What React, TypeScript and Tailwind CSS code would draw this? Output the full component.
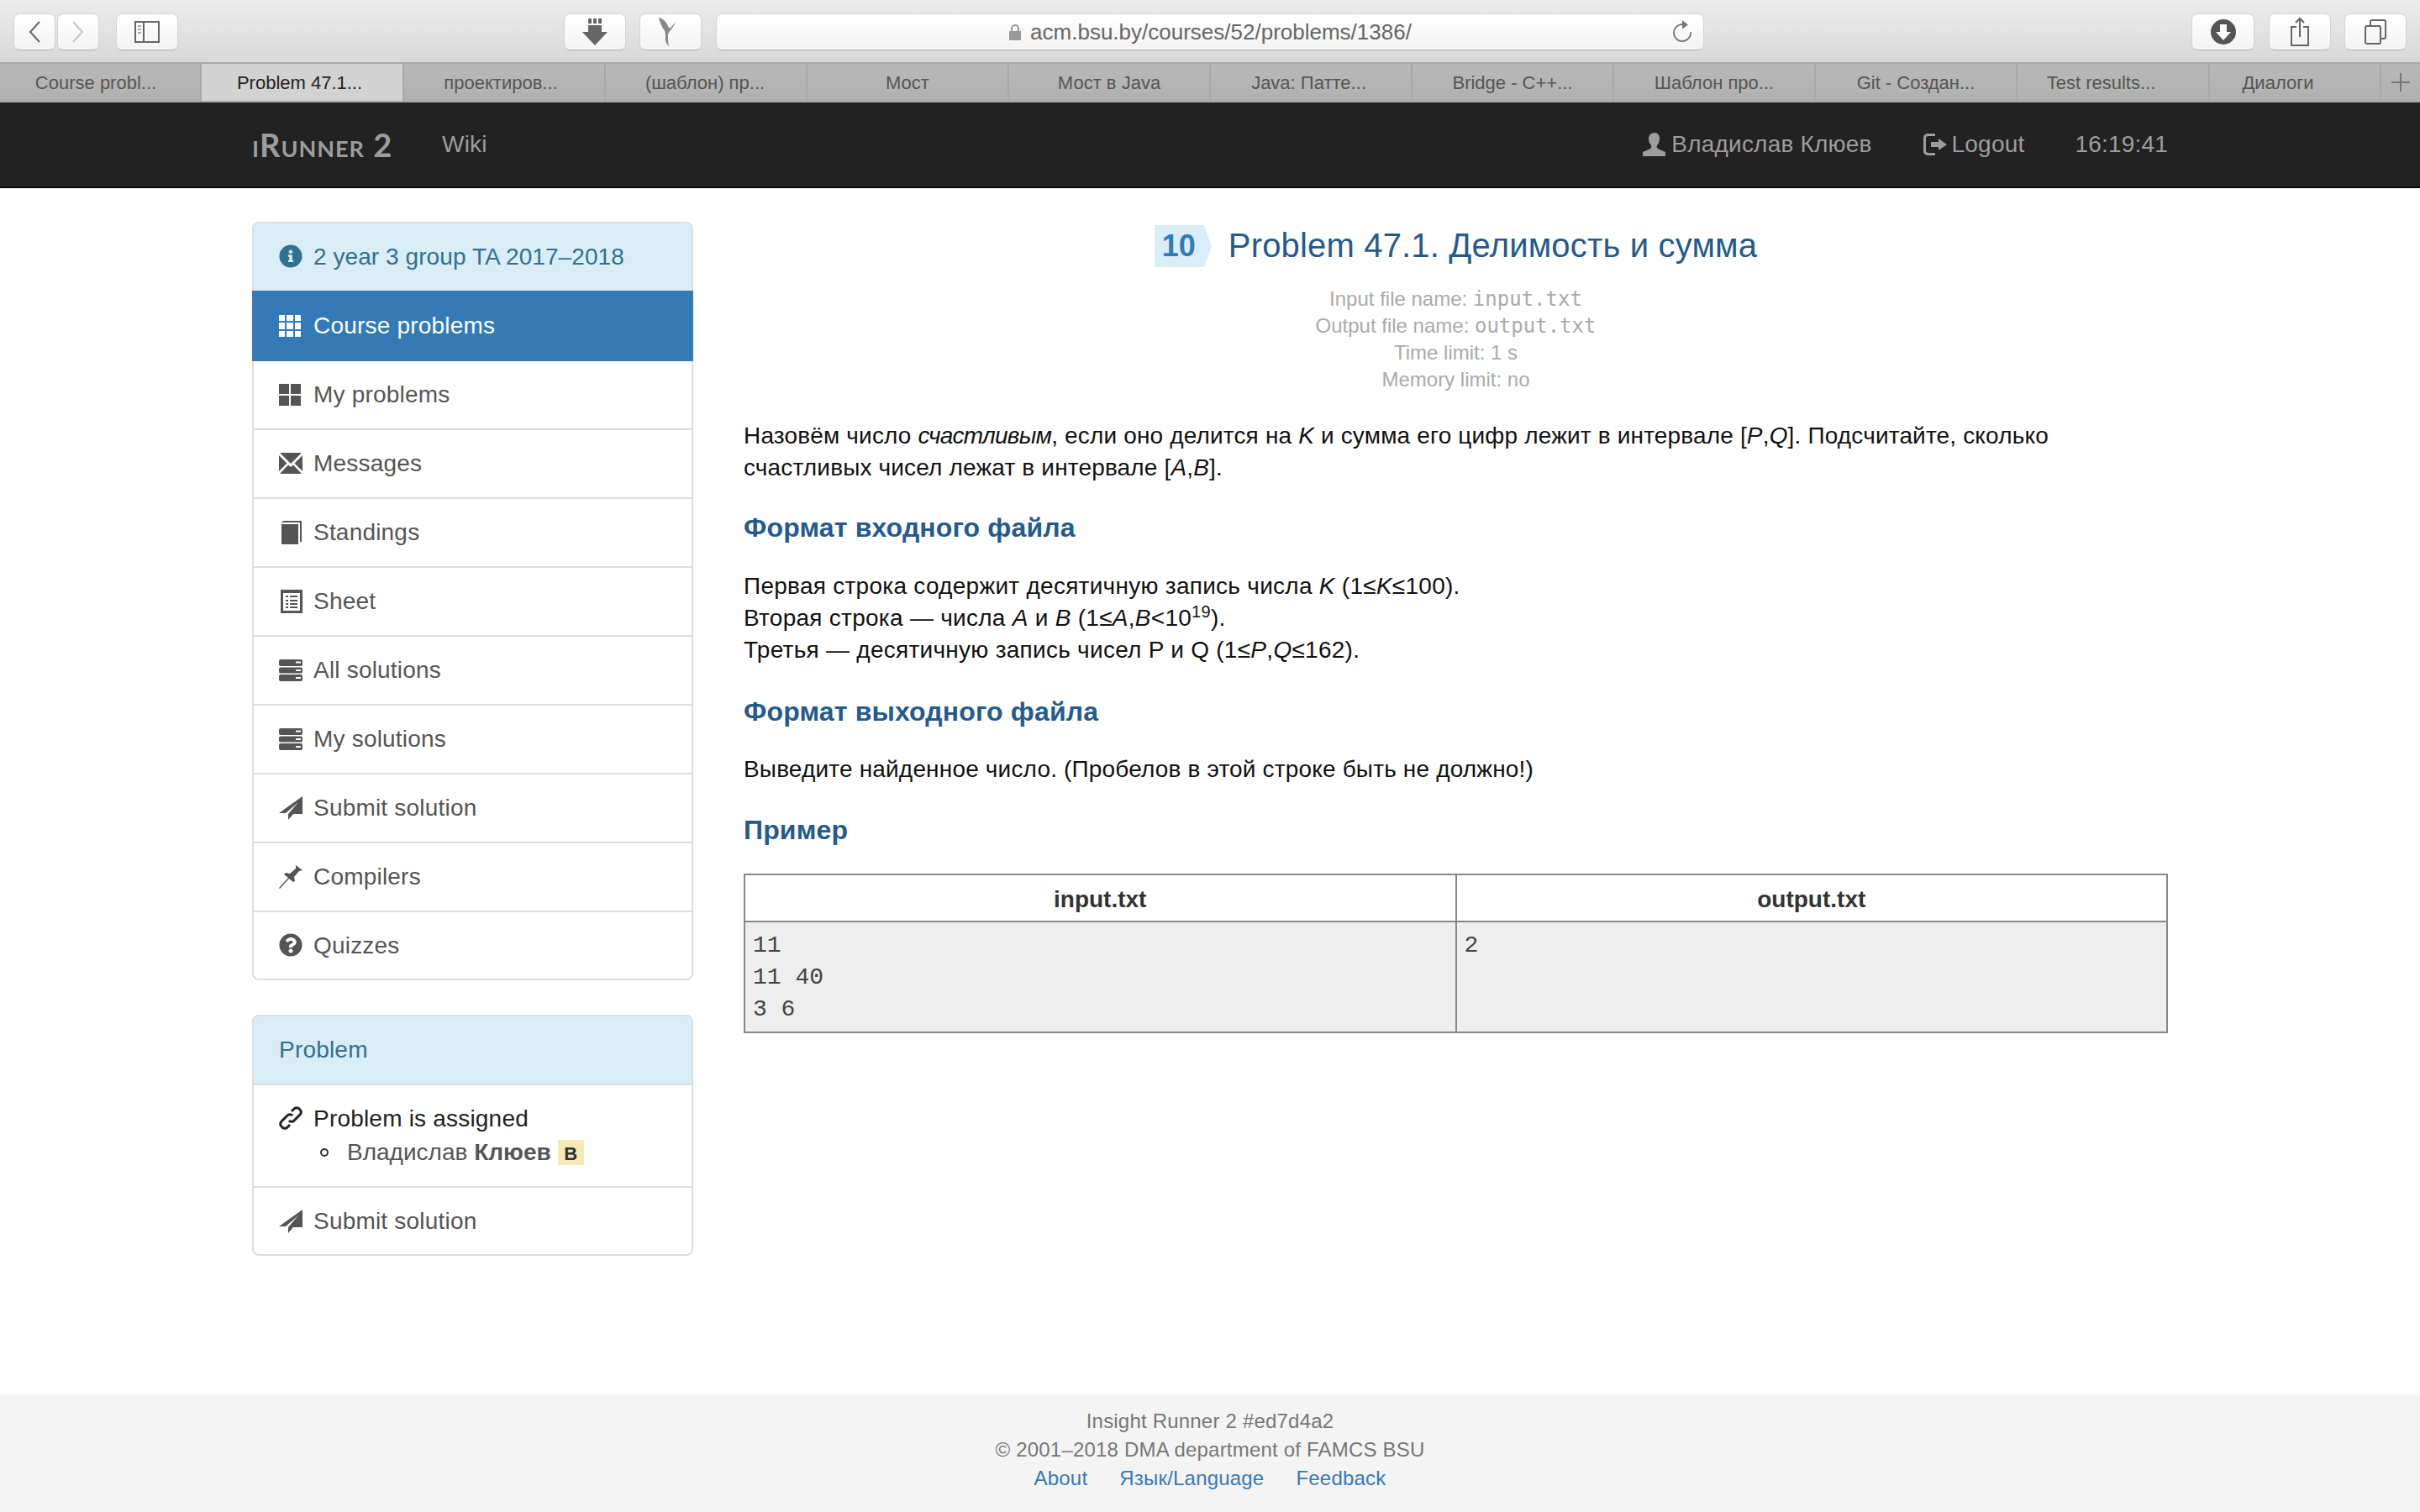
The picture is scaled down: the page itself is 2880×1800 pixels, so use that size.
import type { ReactNode } from 'react';
import { FaInfoCircle, FaQuestionCircle } from 'react-icons/fa';

const tabs = [
  { title: 'Course probl...', width: 'w-[240px] pr-[10px]' },
  { title: 'Problem 47.1...', width: 'w-[241px] pr-[6px]' },
  { title: 'проектиров...', width: 'w-[240px] pr-[8px]' },
  { title: '(шаблон) пр...', width: 'w-[240px] pr-[2px]' },
  { title: 'Мост', width: 'w-[240px]' },
  { title: 'Мост в Java', width: 'w-[240px]' },
  { title: 'Java: Патте...', width: 'w-[240px] pr-[5px]' },
  { title: 'Bridge - C++...', width: 'w-[240px]' },
  { title: 'Шаблон про...', width: 'w-[240px]' },
  { title: 'Git - Создан...', width: 'w-[240px]' },
  { title: 'Test results...', width: 'w-[229px] pr-[28px]' },
  { title: 'Диалоги', width: 'w-[204px] pr-[40px]' },
];

function Glyph({ children, className = '' }: { children: ReactNode; className?: string }) {
  return (
    <svg viewBox="0 0 28 28" fill="currentColor" fillRule="evenodd" className={`w-[28px] h-[28px] shrink-0 ${className}`}>
      {children}
    </svg>
  );
}

const ThIcon = () => (
  <Glyph className="-translate-x-px">
    <path d="M1 1h7v7H1zM10 1h8v7h-8zM20 1h7v7h-7zM1 10h7v8H1zM10 10h8v8h-8zM20 10h7v8h-7zM1 20h7v7H1zM10 20h8v7h-8zM20 20h7v7h-7z" />
  </Glyph>
);
const ThLargeIcon = () => (
  <Glyph className="-translate-x-px">
    <path d="M1 1h12v12H1zM15 1h12v12H15zM1 15h12v12H1zM15 15h12v12H15z" />
  </Glyph>
);
const EnvelopeIcon = () => (
  <Glyph>
    <path d="M1 1h26L14 14zM0 4l9.500 9.500L0 23zM28 4l-9.500 9.500L28 23zM1 26l10-10.500 3 2.500 3-2.500L27 26z" />
  </Glyph>
);
const BookIcon = () => (
  <Glyph>
    <path d="M6 0h21v25h-2V2H6c-1 0-2 .500-3 1 .500-2 1.500-3 3-3zM3 4h20v24H3z" />
  </Glyph>
);
const ListIcon = () => (
  <Glyph>
    <path d="M2 0h26v28H2zM5 4v21h20V4zM8 7h3v2H8zM13 7h9v2h-9zM8 12h3v2H8zM13 12h9v2h-9zM8 16h3v2H8zM13 16h9v2h-9zM8 20h3v2H8zM13 20h9v2h-9z" />
  </Glyph>
);
const TasksIcon = () => (
  <Glyph>
    <path d="M2 1h24a2 2 0 0 1 2 2v4a2 2 0 0 1-2 2H2a2 2 0 0 1-2-2V3a2 2 0 0 1 2-2zM20 3.500v2h6v-2zM2 10.500h24a2 2 0 0 1 2 2v3a2 2 0 0 1-2 2H2a2 2 0 0 1-2-2v-3a2 2 0 0 1 2-2zM20 13v2h6v-2zM2 19h24a2 2 0 0 1 2 2v4a2 2 0 0 1-2 2H2a2 2 0 0 1-2-2v-4a2 2 0 0 1 2-2zM20 22v2h6v-2z" />
  </Glyph>
);
const SendIcon = () => (
  <Glyph>
    <path d="M28 0v21H17l-6 7v-7L23 7 8 20H0z" />
  </Glyph>
);
const PinIcon = () => (
  <Glyph>
    <path d="M20 0l8 6-4 1-6 7 1 5-2 1-5-4L1 28l-1-1 11-12-5-4 2-2 5 1 7-6z" />
  </Glyph>
);
const LinkIcon = () => (
  <svg viewBox="0 0 28 28" fill="none" stroke="currentColor" strokeWidth="3" className="w-[28px] h-[28px] shrink-0 -translate-y-px">
    <path d="M15 6l3-3a4 4 0 0 1 6 0l1 1a4 4 0 0 1 0 6l-7 7a4 4 0 0 1-6 0" />
    <path d="M13 22l-3 3a4 4 0 0 1-6 0l-1-1a4 4 0 0 1 0-6l7-7a4 4 0 0 1 6 0" />
  </svg>
);
const UserIcon = () => (
  <svg viewBox="0 0 30 30" fill="currentColor" className="w-[30px] h-[30px] shrink-0">
    <path d="M15 1c4 0 6 3 6 7 0 3-1 6-3 8-.5 1-.5 3 1 4l9 4v5H1v-5l9-4c1.500-1 1.500-3 1-4-2-2-3-5-3-8 0-4 3-7 7-7z" />
  </svg>
);
const LogoutIcon = () => (
  <svg viewBox="0 0 30 30" fill="currentColor" fillRule="evenodd" className="w-[30px] h-[30px] shrink-0">
    <path d="M6 2h9v3H7a3 3 0 0 0-3 3v14a3 3 0 0 0 3 3h8v3H6a5 5 0 0 1-5-5V7a5 5 0 0 1 5-5z" />
    <path d="M19 8l10 7-10 7v-4h-9v-6h9z" />
  </svg>
);

function MenuRow({ icon, label, height = 'h-[82px] border-b-2 border-[#ddd]' }: { icon: ReactNode; label: string; height?: string }) {
  return (
    <a className={`flex items-center pl-[30px] gap-[13px] text-[#555] ${height}`}>
      {icon}
      <span>{label}</span>
    </a>
  );
}

function ToolButton({ className = '', children }: { className?: string; children?: ReactNode }) {
  return (
    <div className={`h-[44px] flex items-center justify-center rounded-[7px] bg-gradient-to-b from-white to-[#f3f3f3] border border-[#d4d4d4] border-b-[#b5b5b5] text-[#666] ${className}`}>
      {children}
    </div>
  );
}

function BrowserChrome() {
  return (
    <>
      <div className="h-[74px] bg-gradient-to-b from-[#ececec] to-[#d8d8d8] flex items-start pt-[16px] pl-[16px] pr-[16px]">
        <ToolButton className="w-[50px]">
          <svg viewBox="0 0 18 30" className="w-[18px] h-[30px]" fill="none" stroke="#666" strokeWidth="2"><path d="M15 3L4 15l11 12" /></svg>
        </ToolButton>
        <ToolButton className="w-[50px] ml-[2px]">
          <svg viewBox="0 0 18 30" className="w-[18px] h-[30px]" fill="none" stroke="#c4c4c4" strokeWidth="2"><path d="M3 3l11 12L3 27" /></svg>
        </ToolButton>
        <ToolButton className="w-[74px] ml-[20px]">
          <svg viewBox="0 0 30 26" className="w-[30px] h-[26px]" fill="none" stroke="#666" strokeWidth="2">
            <rect x="1" y="1" width="28" height="24" />
            <path d="M11 1v24" />
            <path d="M4 6h4M4 10h4M4 14h4" stroke="#aaa" strokeWidth="2" />
          </svg>
        </ToolButton>
        <ToolButton className="w-[74px] ml-[459px]">
          <svg viewBox="0 0 32 32" className="w-[32px] h-[32px]" fill="#666">
            <path d="M8 0h4v6H8zM14 0h4v6h-4zM20 0h4v6h-4zM8 8h16v8h7L16 32 1 16h7z" />
          </svg>
        </ToolButton>
        <ToolButton className="w-[74px] ml-[16px]">
          <svg viewBox="0 0 32 36" className="w-[32px] h-[36px]" fill="#888">
            <path d="M2 1c5 1 9 5 11 10 1 2 2 3 3 2 2-2 3-4 6-6l-5 8c-2 2-4 4-4 7 0 4 0 8 1 13-3-3-5-7-4-11 0-4 0-7-3-10C5 10 3 6 2 1z" />
          </svg>
        </ToolButton>
        <ToolButton className="w-[1176px] ml-[17px] relative text-[#111] text-[26px] gap-[10px]">
          <svg viewBox="0 0 16 20" className="w-[16px] h-[20px]" fill="#999">
            <path d="M3 9V6a5 5 0 0 1 10 0v3h2v11H1V9zm2 0h6V6a3 3 0 0 0-6 0z" fillRule="evenodd" />
          </svg>
          <span>acm.bsu.by<span className="text-[#666]">/courses/52/problems/1386/</span></span>
          <svg viewBox="0 0 26 30" className="w-[26px] h-[30px] absolute right-[12px] top-[6px]" fill="none" stroke="#777" strokeWidth="1.800">
            <path d="M16 6.500A10 10 0 1 0 23 15" />
            <path d="M13 1l7 5.500-7 5z" fill="#777" stroke="none" />
          </svg>
        </ToolButton>
        <ToolButton className="w-[75px] ml-auto">
          <svg viewBox="0 0 30 30" className="w-[30px] h-[30px]" fill="#555" fillRule="evenodd">
            <path d="M15 0a15 15 0 1 1 0 30 15 15 0 0 1 0-30zM11 6v9H6l9 10 9-10h-5V6z" />
          </svg>
        </ToolButton>
        <ToolButton className="w-[74px] ml-[17px]">
          <svg viewBox="0 0 24 36" className="w-[24px] h-[36px]" fill="none" stroke="#666" strokeWidth="2">
            <path d="M8 12H2v22h20V12h-6M12 24V2M7 7l5-5 5 5" />
          </svg>
        </ToolButton>
        <ToolButton className="w-[74px] ml-[16px]">
          <svg viewBox="0 0 26 30" className="w-[26px] h-[30px]" fill="none" stroke="#666" strokeWidth="2">
            <rect x="1" y="8" width="18" height="21" rx="2" />
            <path d="M7 8V3a2 2 0 0 1 2-2h14a2 2 0 0 1 2 2v18a2 2 0 0 1-2 2h-4" />
          </svg>
        </ToolButton>
      </div>
      <div className="h-[48px] flex bg-gradient-to-b from-[#b9b9b9] to-[#b0b0b0] border-y-2 border-[#a8a8a8]">
        {tabs.map((t, i) => (
          <div
            key={t.title}
            className={`${t.width} flex items-center justify-center text-[22px] border-r-2 border-[#a8a8a8] ${i === 1 ? 'bg-[#d2d2d2] text-[#222]' : 'text-[#555]'}`}
          >
            {t.title}
          </div>
        ))}
        <div className="flex-1 flex items-center justify-center">
          <svg viewBox="0 0 22 22" className="w-[22px] h-[22px]" stroke="#777" strokeWidth="2"><path d="M11 0v22M0 11h22" /></svg>
        </div>
      </div>
    </>
  );
}

function TopNav() {
  return (
    <nav className="h-[102px] bg-[#222] border-b-2 border-[#080808] text-[#9d9d9d] text-[28px] tracking-[0.2px]">
      <div className="w-[2340px] mx-auto h-full px-[30px] flex items-center">
        <span className="[font-family:Lato,sans-serif] font-bold text-[38px] [font-variant:small-caps] tracking-[1px] w-[226px]">iRunner 2</span>
        <a>Wiki</a>
        <div className="ml-auto flex items-center">
          <UserIcon />
          <span className="ml-[5px]">Владислав Клюев</span>
          <span className="ml-[60px]"><LogoutIcon /></span>
          <span className="ml-[5px]">Logout</span>
          <span className="ml-[60px]">16:19:41</span>
        </div>
      </div>
    </nav>
  );
}

function Sidebar() {
  return (
    <aside className="w-[525px] shrink-0 text-[28px] tracking-[0.2px]">
      <div className="border-2 border-[#ddd] rounded-lg">
        <div className="h-[80px] bg-[#d9edf7] text-[#31708f] flex items-center pl-[30px] gap-[13px] rounded-t-md tracking-[0.07px]">
          <FaInfoCircle className="w-[28px] h-[28px] shrink-0 -translate-y-px" />
          <span>2 year 3 group TA 2017–2018</span>
        </div>
        <a className="flex items-center h-[84px] -mx-[2px] pl-[32px] gap-[13px] bg-[#337ab7] text-white">
          <ThIcon />
          <span>Course problems</span>
        </a>
        <MenuRow icon={<ThLargeIcon />} label="My problems" />
        <MenuRow icon={<EnvelopeIcon />} label="Messages" />
        <MenuRow icon={<BookIcon />} label="Standings" />
        <MenuRow icon={<ListIcon />} label="Sheet" />
        <MenuRow icon={<TasksIcon />} label="All solutions" />
        <MenuRow icon={<TasksIcon />} label="My solutions" />
        <MenuRow icon={<SendIcon />} label="Submit solution" />
        <MenuRow icon={<PinIcon />} label="Compilers" />
        <MenuRow icon={<FaQuestionCircle className="w-[28px] h-[28px] shrink-0 -translate-y-px" />} label="Quizzes" height="h-[79px]" />
      </div>
      <div className="mt-[41px] border-2 border-[#ddd] rounded-lg">
        <div className="h-[80px] bg-[#d9edf7] text-[#31708f] flex items-center pl-[30px] border-b-2 border-[#ddd] box-content rounded-t-md">
          Problem
        </div>
        <div className="h-[100px] border-b-2 border-[#ddd] pl-[30px] pt-[20px] box-content">
          <div className="flex items-center gap-[13px] h-[40px] text-[#222]">
            <LinkIcon />
            <span>Problem is assigned</span>
          </div>
          <ul className="ml-[49px] text-[#555] tracking-normal">
            <li className="flex items-center h-[40px]">
              <span className="w-[10px] h-[10px] rounded-full border-2 border-[#333] mr-[22px]" />
              <span>Владислав <b>Клюев</b></span>
              <span className="ml-[8px] w-[31px] h-[30px] leading-[33px] text-center bg-[#f6e9b4] text-[#333] text-[22px] font-bold">В</span>
            </li>
          </ul>
        </div>
        <MenuRow icon={<SendIcon />} label="Submit solution" height="h-[79px]" />
      </div>
    </aside>
  );
}

function SectionTitle({ children }: { children: ReactNode }) {
  return <h3 className="text-[32px] leading-[40px] font-bold text-[#245a8d] tracking-[0.15px]">{children}</h3>;
}

function ProblemBody() {
  return (
    <main className="flex-1 ml-[60px] pt-[4px] text-[28px] leading-[38px] text-[#111]">
      <div className="flex items-center justify-center h-[50px]">
        <span className="h-[50px] w-[68px] bg-[#d9edf7] text-[#337ab7] font-bold text-[36px] leading-[50px] pl-[9px] [clip-path:polygon(0_0,87%_0,100%_50%,87%_100%,0_100%)]">10</span>
        <h1 className="ml-[20px] text-[40px] leading-[48px] pb-[2px] text-[#245a8d] tracking-[0.17px]">Problem 47.1. Делимость и сумма</h1>
      </div>
      <div className="mt-[22px] text-center text-[24px] leading-[32px] text-[#aaa]">
        <div>Input file name: <code className="[font-family:'DejaVu_Sans_Mono',monospace]">input.txt</code></div>
        <div>Output file name: <code className="[font-family:'DejaVu_Sans_Mono',monospace]">output.txt</code></div>
        <div>Time limit: 1 s</div>
        <div>Memory limit: no</div>
      </div>
      <p className="mt-[32px] tracking-[0.16px]">
        Назовём число <i className="tracking-[-0.7px]">счастливым</i>, если оно делится на <i>K</i> и сумма его цифр лежит в интервале [<i>P</i>,<i>Q</i>]. Подсчитайте, сколько счастливых чисел лежат в интервале [<i>A</i>,<i>B</i>].
      </p>
      <div className="mt-[32px]"><SectionTitle>Формат входного файла</SectionTitle></div>
      <p className="mt-[31px] tracking-[0.27px]">
        Первая строка содержит десятичную запись числа <i>K</i> (1≤<i>K</i>≤100).<br />
        Вторая строка — числа <i>A</i> и <i>B</i> (1≤<i>A</i>,<i>B</i>&lt;10<sup className="text-[20px] leading-none">19</sup>).<br />
        Третья — десятичную запись чисел P и Q (1≤<i>P</i>,<i>Q</i>≤162).
      </p>
      <div className="mt-[34px]"><SectionTitle>Формат выходного файла</SectionTitle></div>
      <p className="mt-[30px] tracking-[0.17px]">Выведите найденное число. (Пробелов в этой строке быть не должно!)</p>
      <div className="mt-[33px]"><SectionTitle>Пример</SectionTitle></div>
      <table className="mt-[32px] w-full table-fixed border-collapse border-2 border-[#888] text-[#333]">
        <thead>
          <tr className="h-[56px]">
            <th className="border-2 border-[#888] pt-[3px]">input.txt</th>
            <th className="border-2 border-[#888] pt-[3px]">output.txt</th>
          </tr>
        </thead>
        <tbody>
          <tr className="bg-[#eee] h-[132px] align-top [font-family:'Liberation_Mono',monospace] text-[#444]">
            <td className="border-2 border-[#888] px-[9px] pt-[9px] whitespace-pre">{'11\n11 40\n3 6'}</td>
            <td className="border-2 border-[#888] px-[9px] pt-[9px]">2</td>
          </tr>
        </tbody>
      </table>
    </main>
  );
}

export default function App() {
  return (
    <div className="h-[1800px] flex flex-col bg-white [font-family:'Liberation_Sans',sans-serif]">
      <BrowserChrome />
      <TopNav />
      <div className="flex-1">
        <div className="w-[2280px] mx-auto pt-[40px] flex">
          <Sidebar />
          <ProblemBody />
        </div>
      </div>
      <footer className="h-[140px] bg-[#f4f4f4] text-[#777] text-[24px] leading-[34px] text-center pt-[15px] tracking-[0.2px]">
        <div>Insight Runner 2 #ed7d4a2</div>
        <div>© 2001–2018 DMA department of FAMCS BSU</div>
        <div className="flex justify-center gap-[38px] text-[#337ab7]">
          <a>About</a>
          <a>Язык/Language</a>
          <a>Feedback</a>
        </div>
      </footer>
    </div>
  );
}
